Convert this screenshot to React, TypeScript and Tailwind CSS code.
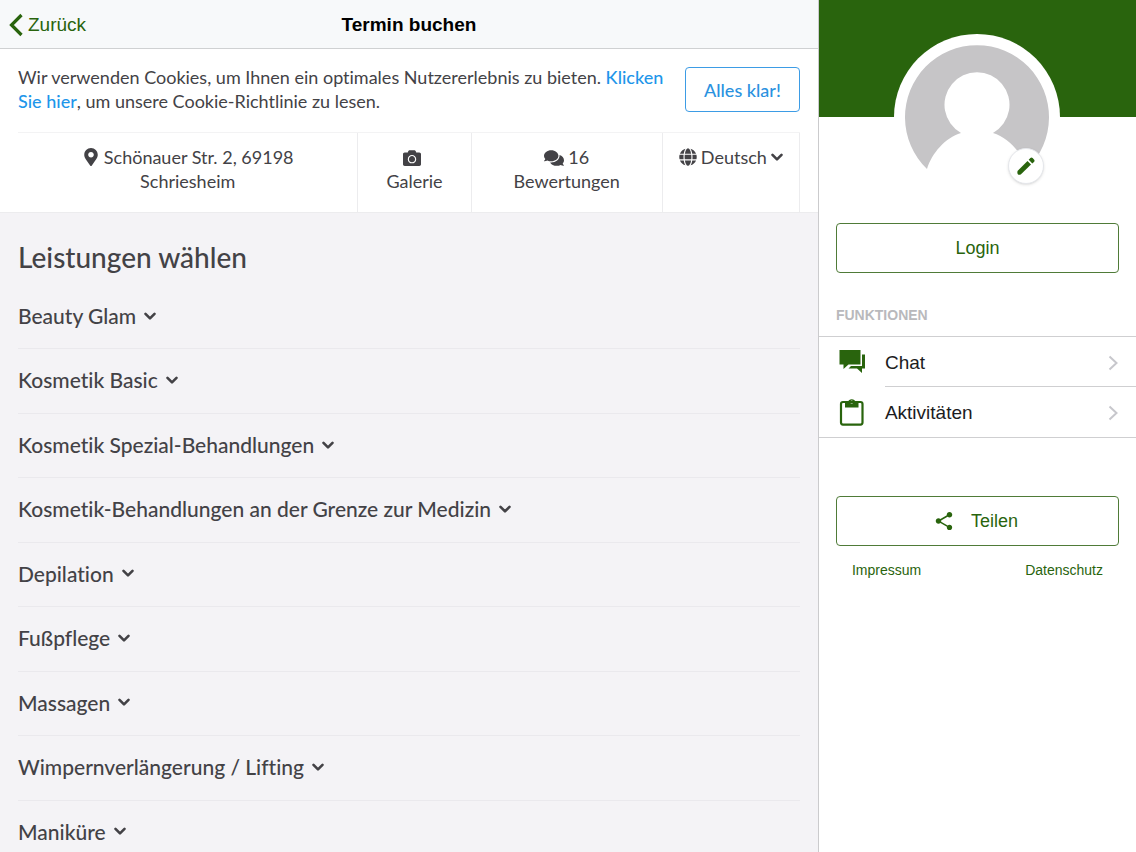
import { useState } from 'react'
import { FaCamera, FaComments, FaGlobe, FaMapMarkerAlt } from 'react-icons/fa'
import { IoMdShare } from 'react-icons/io'

const CATEGORIES = [
  'Beauty Glam',
  'Kosmetik Basic',
  'Kosmetik Spezial-Behandlungen',
  'Kosmetik-Behandlungen an der Grenze zur Medizin',
  'Depilation',
  'Fußpflege',
  'Massagen',
  'Wimpernverlängerung / Lifting',
  'Maniküre'
]

function ChatIcon() {
  return (
    <svg viewBox="0 0 27 24" className="w-[27px] h-6" fill="currentColor" aria-hidden="true">
      <path d="M1.500 0H22.500V14.500H10.500L5.500 19V14.500H1.500Z" />
      <path d="M24 4.500H27V18.500H24V23L19 18.500H10.500L13 16H24Z" />
    </svg>
  )
}

function ClipboardIcon() {
  return (
    <svg viewBox="0 0 26 28" className="w-[26px] h-7" aria-hidden="true">
      <rect x="3" y="4" width="21.500" height="22.600" rx="2" fill="none" stroke="currentColor" strokeWidth="2.200" />
      <path
        fill="currentColor"
        fillRule="evenodd"
        d="M7 4H10A3.900 3.900 0 0 1 17.500 4H20.500V9.500H7ZM13.700 2.400A1.600 1.600 0 1 0 13.700 5.600A1.600 1.600 0 1 0 13.700 2.400Z"
      />
    </svg>
  )
}

function PencilIcon() {
  return (
    <svg viewBox="0 0 20 20" className="w-5 h-5" fill="currentColor" aria-hidden="true">
      <path d="M1.500 15L11.500 5L15 8.500L5 18.300Q3.500 19.200 2 18.600Q0.900 17 1.500 15Z" />
      <path d="M12.700 3.800L14.400 2Q15.500 1.100 16.600 2L18.200 3.700Q19 4.800 18.200 5.800L16.300 7.500Z" />
    </svg>
  )
}

function ChevronDown() {
  return (
    <svg viewBox="0 0 12 12" className="w-3 h-3" fill="none" aria-hidden="true">
      <path d="M1.500 3.800L6 8.300L10.500 3.800" stroke="currentColor" strokeWidth="2.600" strokeLinecap="round" strokeLinejoin="round" />
    </svg>
  )
}

function DisclosureIcon() {
  return (
    <svg viewBox="0 0 10 16" className="w-[10px] h-4 text-[#c7c7cc]" fill="none" aria-hidden="true">
      <path d="M1.500 1.500L8.500 8L1.500 14.500" stroke="currentColor" strokeWidth="2" />
    </svg>
  )
}

function Avatar() {
  return (
    <div className="relative mx-auto w-[166px] h-[166px] rounded-full bg-white p-[11px]">
      <svg viewBox="0 0 144 144" className="w-full h-full" aria-hidden="true">
        <path
          fill="#c6c5c7"
          d="M22 124A72 72 0 1 1 122 124C117 108 104 93 88 88A32.500 32.500 0 1 0 56 88C40 93 27 108 22 124Z"
        />
      </svg>
      <button
        aria-label="Profilbild bearbeiten"
        className="absolute right-4 bottom-4 w-9 h-9 rounded-full bg-white border border-gray-200 shadow-sm flex items-center justify-center text-[#29640d]"
      >
        <PencilIcon />
      </button>
    </div>
  )
}

export default function App() {
  const [language, setLanguage] = useState('de')
  const [showCookies, setShowCookies] = useState(true)

  return (
    <div className="h-screen flex bg-white font-['Liberation_Sans',sans-serif] overflow-hidden">
      <main className="flex-1 min-w-0 flex flex-col bg-[#f4f3f6]">
        {/* Header */}
        <header className="h-[49px] shrink-0 grid grid-cols-3 items-center px-2 pt-[2px] bg-[#f7f9fa] border-b border-[#cfd1d2] text-[19px]">
          <button className="flex items-center gap-1 justify-self-start text-[#29640d]">
            <svg viewBox="0 0 16 24" className="w-4 h-6" fill="none" aria-hidden="true">
              <path d="M13.500 2L3.500 12L13.500 22" stroke="currentColor" strokeWidth="3.200" />
            </svg>
            Zurück
          </button>
          <h1 className="text-center font-bold text-black">Termin buchen</h1>
        </header>

        <div className="flex-1 min-h-0 overflow-y-auto [scrollbar-width:none] font-['Lato',sans-serif] [font-variant-ligatures:none] text-[#434246]">
          <div className="bg-white px-[18px] text-lg leading-6">
            {/* Cookie-Hinweis */}
            {showCookies && (
              <div className="flex items-start justify-between gap-5 pt-4 pb-[19px]">
                <p>
                  Wir verwenden Cookies, um Ihnen ein optimales Nutzererlebnis zu bieten.{' '}
                  <a href="#cookies" className="font-medium text-[#1e96ea]">Klicken Sie hier</a>, um unsere Cookie-Richtlinie zu lesen.
                </p>
                <button
                  onClick={() => setShowCookies(false)}
                  className="mt-[2px] h-[45px] w-[115px] shrink-0 rounded border border-[#3d9ce5] font-medium text-[#2b92e0]"
                >
                  Alles klar!
                </button>
              </div>
            )}

            {/* Info */}
            <div className="grid grid-cols-[340fr_113fr_191fr_137fr] h-20 border-t border-[#f3f3f4] text-center *:border-r *:border-[#ececee] *:pt-3">
              <address className="not-italic px-12">
                <FaMapMarkerAlt className="inline align-[-2px] mr-1" />
                Schönauer Str. 2, 69198 Schriesheim
              </address>
              <a href="#galerie">
                <FaCamera className="inline align-[-3px] mr-1" />
                <br />
                Galerie
              </a>
              <a href="#bewertungen">
                <FaComments className="inline align-[-4px] mr-1 w-5 h-5" />
                16
                <br />
                Bewertungen
              </a>
              <div className="flex items-start justify-center">
                <label htmlFor="language" className="h-6 flex items-center mr-1" aria-label="Sprache">
                  <FaGlobe className="w-[18px] h-[18px]" />
                </label>
                <select
                  id="language"
                  value={language}
                  onChange={(e) => setLanguage(e.target.value)}
                  className="h-6 mr-1 appearance-none [field-sizing:content]"
                >
                  <option value="de">Deutsch</option>
                  <option value="en">English</option>
                </select>
                <span className="h-6 flex items-center">
                  <ChevronDown />
                </span>
              </div>
            </div>
          </div>

          {/* Leistungen */}
          <section className="border-t border-[#ececee] px-[18px] pt-7">
            <h2 className="text-[28px] leading-8 font-medium">Leistungen wählen</h2>
            <ul className="mt-3 grid auto-rows-fr min-h-[580px]">
              {CATEGORIES.map((category) => (
                <li key={category} className="border-b border-[#eae9ed]">
                  <button className="w-full h-full pb-[2px] flex items-center gap-2 text-[21px] font-medium text-left">
                    {category}
                    <ChevronDown />
                  </button>
                </li>
              ))}
            </ul>
          </section>
        </div>
      </main>

      {/* Sidebar */}
      <aside className="w-[28%] shrink-0 border-l border-[#cbcbcd] text-lg text-[#29640d]">
        <div className="h-[117px] bg-[#29640d] pt-[34px]">
          <Avatar />
        </div>

        <div className="px-[17px] pt-[106px]">
          <button className="w-full h-[50px] rounded border border-[#4f7b38]">Login</button>
        </div>

        <h2 className="px-[17px] mt-8 mb-[11px] text-sm leading-5 font-bold text-[#b9b9bc]">FUNKTIONEN</h2>
        <nav className="border-y border-[#cfcfd1] pl-[19px] text-[19px] text-[#1c1c1e]">
          <a href="#chat" className="flex items-center h-[50px]">
            <span className="w-[47px] text-[#29640d]"><ChatIcon /></span>
            <span className="flex-1 h-full flex items-center justify-between pt-[2px] pr-[18px] border-b border-[#cfcfd1]">
              Chat
              <DisclosureIcon />
            </span>
          </a>
          <a href="#aktivitaeten" className="flex items-center h-[50px]">
            <span className="w-[47px] text-[#29640d]"><ClipboardIcon /></span>
            <span className="flex-1 flex items-center justify-between pt-[2px] pr-[18px]">
              Aktivitäten
              <DisclosureIcon />
            </span>
          </a>
        </nav>

        <div className="px-[17px] mt-[58px]">
          <button className="w-full h-[50px] pr-1 rounded border border-[#4f7b38] flex items-center justify-center gap-4">
            <IoMdShare className="w-[22px] h-[22px]" />
            Teilen
          </button>
          <div className="flex justify-between px-4 mt-[14px] text-sm">
            <a href="#impressum">Impressum</a>
            <a href="#datenschutz">Datenschutz</a>
          </div>
        </div>
      </aside>
    </div>
  )
}
